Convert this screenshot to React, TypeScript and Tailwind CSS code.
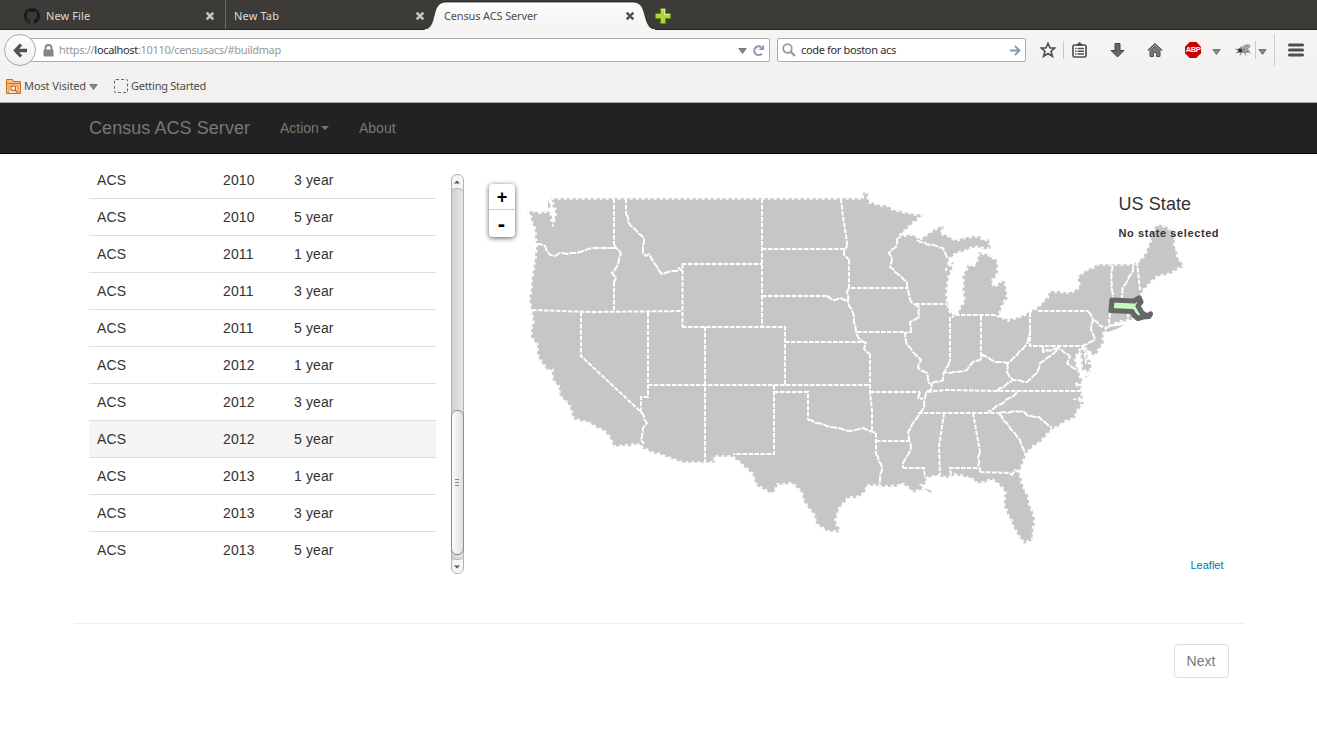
import React from "react";

type Pt = [number, number];

function parse(s: string): Pt[] {
  return s.split(" ").map((p) => p.split(",").map(Number) as Pt);
}

// Breaks a line into short steps with small deterministic offsets, as a shore has.
function rough(s: string, amount: number, close = false): string {
  const pts = parse(s);
  if (close) pts.push(pts[0]);
  let seed = 7;
  const rnd = () => {
    seed = (seed * 16807) % 2147483647;
    return seed / 2147483647 - 0.5;
  };
  const out: string[] = [];
  for (let i = 0; i < pts.length - 1; i++) {
    const [x1, y1] = pts[i];
    const [x2, y2] = pts[i + 1];
    out.push(`${x1},${y1}`);
    const len = Math.hypot(x2 - x1, y2 - y1);
    if (y1 === y2 || len > 60) continue;
    const n = Math.floor(len / 3.5);
    for (let k = 1; k < n; k++) {
      const t = k / n;
      const d = rnd() * amount;
      const x = x1 + (x2 - x1) * t - ((y2 - y1) / len) * d;
      const y = y1 + (y2 - y1) * t + ((x2 - x1) / len) * d;
      out.push(`${x.toFixed(1)},${y.toFixed(1)}`);
    }
  }
  if (!close) out.push(pts[pts.length - 1].join(","));
  return `M${out.join("L")}${close ? "Z" : ""}`;
}

const mainland =
  "528,210 532,219 536,233 537,246 536,258 534,270 532,286 530,298 532,309 534,323 532,331 531.5,336 537,343 539,357 548,370 553,369 554,381 559,386 560,394 570,406 574,419 587,421 602,429 611,438 614,446 641,444 643,448 682,462 714,462 714,456 733,456 753,473 757,485 772,493 777,484 793,483 802,492 804,501 813,512 818,525 828,531 839,532 835,520 838,510 847,498 858,496 864,492 866,485 877,485 897,486 900,483 907,486 913,492 923,489 920,485 926,483 925,479 935,475 948,477 955,474 970,477 978,483 993,479 1000,485 1006,493 1005,507 1010,517 1017,532 1024,543 1032,540 1034,520 1028,498 1021,483 1019,470 1025,453 1043,438 1053,428 1067,420 1075,417 1076,411 1083,403 1074,399 1082,398 1081,392 1081,387 1074,384 1082,383 1079,376 1077,369 1075,362 1075,356 1079,350 1083,347 1081,355 1082,363 1083,370 1089,371 1085,379 1090,370 1091,363 1087,358 1085,348 1089,350 1095,355 1103,343 1103,333 1106,326 1120,321 1133,319 1141,315 1141,293 1150,282 1160,275 1170,273 1178,268 1183,267 1177,258 1174,243 1174,233 1167,228 1158,225 1153,232 1148,248 1147,252 1138,262 1133,265 1097,265 1085,272 1078,278 1080,287 1075,291 1067,293 1050,291 1048,298 1037,309 1020,317 1008,321 997,316 1002,305 1007,298 1005,283 1002,281 994,287 991,282 997,273 997,262 988,255 979,253 978,260 973,267 968,265 963,277 965,300 959,313 953,317 948,310 946,293 948,277 953,263 945,272 948,259 957,252 973,247 990,248 988,240 983,241 980,237 973,237 957,241 940,233 943,226 930,233 920,240 911,235 898,238 902,232 922,215 914,215 904,213 895,211 887,206 880,206 869,203 867,193 864,193 863,199 552,199 556,213 553,226 550,213 530,212";

const rivers = [
  "536,244 545,246 550,255 555,256 560,253 567,254 580,252 592,248 616,248",
  "614,244 616,248 621,254 617,266 612,273 616,278 614,282",
  "626,214 630,225 644,238 643,253 646,256 649,254 657,267 662,274 668,272 677,271 679,268 682,271",
  "641,412 647,423 643,428 641,440 644,444",
  "826,296 832,300 840,298 845,300 848,301",
  "847,242 844,255 849,260",
  "849,288 847,292 848,302 853,313 856,332 860,340 866,343 864,349 870,354",
  "897,238 896,247 889,253 892,258 890,267 907,282 908,290 911,302 919,307 919,317 910,322 911,332 905,333 907,345 916,355 921,360 918,368 927,373 928,382 932,385 931,390 926,392 924,408 917,418 908,432 911,448 903,463 903,468",
  "917,240 920,242 943,248 947,258",
  "949,362 945,372",
  "1030,330 1028,342 1017,355 1008,363 995,362 983,355 980,360 973,362 967,370 950,373 944,372 943,380 932,383",
  "997,391 1012,381",
  "1007,363 1007,372 1013,380 1027,382 1037,373 1040,363 1055,352 1059,348",
  "1043,347 1043,352 1058,348 1070,356 1067,363 1077,370",
  "1017,392 1010,398 988,412",
  "1000,413 1023,411 1028,416 1039,417 1052,428",
  "808,420 827,426 842,429 850,431 863,428 876,433",
  "876,454 882,467 879,485",
  "980,452 978,458 980,472",
  "999,414 1020,440 1025,453",
  "1010,473 1012,475 1015,470 1019,472",
  "1088,311 1093,320 1091,330 1095,340 1083,346",
  "1093,320 1103,327",
  "1112,265 1111,280 1113,298",
  "1133,266 1132,273 1123,287 1122,298",
  "920,392 918,398 923,399",
];

const surveyLines =
  "M614,199V244 M614,282V310 M626,199V214 M682,264H762 M682.5,264V327 M682,327H785V385 M532,310L590,312L682,311 M581,312V356L641,412V397H648V312 M648,385H870 M705,327V462 M762,199V327 M762,249H846 M762,296H826 M841,199L843,217L847,242 M849,260V288H908 M857,332H905 M785,342H864 M870,354V392L872,410V430 M870,392H920 M915,304H947 M950,317V362 M955,315H996 M981,316V359 M1030,313V346H1083 M927,392L945,390L997,391H1082 M918,413H1000 M774,385V454H733 M774,392H808V420 M876,433V454 M876,441H908 M903,468H924L925,478 M944,413L939,447L940,475 M973,413L980,452 M951,475L950,468H978 M980,472L1010,473 M1038,311H1088 M1110,313L1109,323 M1137,262L1140,290 M1128,313V322 M1084,347L1086,363H1090";

function UsMap() {
  const coast = rough(mainland, 1.8, true);
  return (
    <svg className="block h-[400px] w-[750px]" viewBox="479 174 750 400" fill="none">
      <path d={coast} fill="#c6c6c6" stroke="#c6c6c6" strokeWidth="1.6" strokeLinejoin="round" />
      <path d="M1105,331L1109,327L1124,325L1119,328L1108,332ZM924,488L932,491L930,493ZM918,215L922,214L921,216ZM548,200L551,206L548,209Z" fill="#c6c6c6" />
      <path d={coast} stroke="#fff" strokeWidth="1.6" strokeDasharray="3 3" strokeLinejoin="round" />
      <g stroke="#fff" strokeWidth="2" strokeDasharray="4.6 1.4">
        <path d={surveyLines} />
        {rivers.map((r) => (
          <path key={r} d={rough(r, 1.6)} strokeDasharray="7 1" strokeLinejoin="round" />
        ))}
      </g>
      <path
        d="M1112,300L1134,301L1139,298L1141,302L1138,306L1142,313L1147,316L1150.500,314L1149,316.500L1143,317L1138,318.500L1134,315L1132,311.500L1111,310.500Z"
        fill="#c3fac3"
        stroke="#666"
        strokeWidth="5.2"
        strokeLinejoin="round"
      />
    </svg>
  );
}

function Caret({ className = "" }: { className?: string }) {
  return (
    <svg className={`h-[6px] w-[9px] shrink-0 ${className}`} viewBox="0 0 9 6">
      <path d="M.8.5H8.200L4.500 5.500Z" fill="#878787" stroke="#666" strokeWidth=".8" />
    </svg>
  );
}

function Close({ dark = false }: { dark?: boolean }) {
  return (
    <svg className="h-[10px] w-[10px]" viewBox="0 0 9 9">
      <path d="M1.500 1.500L7.500 7.500M7.500 1.500L1.500 7.500" stroke={dark ? "#555" : "#c9c7c0"} strokeWidth="2.300" />
    </svg>
  );
}

function TabStrip() {
  return (
    <div className="relative flex h-[30px] border-b border-[#24231f] bg-[#3c3b37] text-[11px] text-[#dfdbd2]">
      <div className="flex w-[225px] items-center pt-[3px] pl-[24px]">
        <svg className="h-4 w-4" viewBox="0 0 16 16" fill="#1b1b1b">
          <path d="M8 0C3.580 0 0 3.580 0 8c0 3.540 2.290 6.530 5.470 7.590.4.070.55-.17.55-.38 0-.19-.01-.82-.01-1.490-2.010.37-2.530-.49-2.690-.94-.09-.23-.48-.94-.82-1.130-.28-.15-.68-.52-.01-.53.63-.01 1.080.58 1.230.82.72 1.210 1.870.87 2.330.66.070-.52.28-.87.51-1.070-1.780-.2-3.640-.89-3.640-3.950 0-.87.31-1.590.82-2.150-.08-.2-.36-1.020.080-2.120 0 0 .67-.21 2.200.82.640-.18 1.320-.27 2-.27s1.360.09 2 .27c1.530-1.040 2.200-.82 2.200-.82.44 1.100.16 1.920.080 2.120.51.56.82 1.270.82 2.150 0 3.070-1.870 3.750-3.650 3.950.29.25.54.73.54 1.480 0 1.070-.01 1.930-.01 2.200 0 .21.15.46.55.38A8.010 8.010 0 0 0 16 8c0-4.420-3.580-8-8-8" />
        </svg>
        <span className="ml-[6px] w-[159px] tracking-[0.1px]">New File</span>
        <Close />
      </div>
      <div className="flex w-[208px] items-center border-l border-[#6d6b65] pt-[3px] pl-[8px]">
        <span className="w-[181px] tracking-[0.15px]">New Tab</span>
        <Close />
      </div>
      <svg className="absolute top-0 left-[420px] h-[30px] w-[240px]" viewBox="0 0 240 30">
        <defs>
          <linearGradient id="tab" x1="0" y1="0" x2="0" y2="1">
            <stop offset="0" stopColor="#fcfcfc" />
            <stop offset="1" stopColor="#f5f4f3" />
          </linearGradient>
        </defs>
        <path d="M2 30C19 30 9 2 26 2H213C230 2 220 30 238 30Z" fill="url(#tab)" stroke="#24231f" strokeWidth=".8" />
        <path d="M5 30H235" stroke="#f6f5f4" strokeWidth="2" />
      </svg>
      <div className="relative flex w-[220px] items-center pt-[3px] pl-[11px] text-[#4c4c4c]">
        <span className="w-[181px] tracking-[-0.15px]">Census ACS Server</span>
        <Close dark />
      </div>
      <svg className="mt-[8px] ml-[2px] h-4 w-4" viewBox="0 0 16 16">
        <path d="M5.500.5H10.500V5.500H15.500V10.500H10.500V15.500H5.500V10.500H.5V5.500H5.500Z" fill="#b5d334" stroke="#5f8a1d" />
        <path d="M6.500 1.500H9.500V6.500H14.500" fill="none" stroke="#e0ef9c" />
      </svg>
    </div>
  );
}

function ToolIcons() {
  return (
    <div className="flex h-full flex-1 items-center">
      <svg className="ml-[14px] h-4 w-4" viewBox="0 0 16 16">
        <path d="M8 1.500L10 6H14.700L11 9.200L12.400 14.300L8 11.500L3.600 14.300L5 9.200L1.300 6H6Z" fill="#fff" stroke="#505050" strokeWidth="1.700" />
      </svg>
      <div className="ml-[7px] h-[18px] w-px bg-[#c3c9cf]" />
      <svg className="ml-[8px] h-4 w-[15px]" viewBox="0 0 15 16">
        <rect x="1" y="3" width="13" height="12" rx="1.500" fill="#fff" stroke="#505050" strokeWidth="1.700" />
        <path d="M4 3.500L7.500.5L11 3.500Z" fill="#505050" stroke="#505050" />
        <path d="M3 6.500H4.500M3 9.200H4.500M3 12H4.500M5.500 6.500H12M5.500 9.200H12M5.500 12H12" stroke="#505050" strokeWidth="1.500" />
      </svg>
      <svg className="ml-[23px] h-[15px] w-[15px]" viewBox="0 0 15 15">
        <path d="M5 .5H10V7.500H14L7.500 14L1 7.500H5Z" fill="#666" stroke="#484848" />
      </svg>
      <svg className="ml-[22px] h-4 w-4" viewBox="0 0 16 16">
        <path d="M1 8.500L8 2L15 8.500" fill="none" stroke="#505050" strokeWidth="1.500" />
        <path d="M3 8.500L8 4.200L13 8.500V14.500H9.500V10.500H6.500V14.500H3Z" fill="#777" stroke="#505050" />
      </svg>
      <div className="relative ml-[22px] h-4 w-4">
        <svg className="h-4 w-4" viewBox="0 0 16 16">
          <path d="M4.700 0H11.300L16 4.700V11.300L11.300 16H4.700L0 11.300V4.700Z" fill="#c70000" />
        </svg>
        <span className="absolute inset-0 text-center font-['Liberation_Sans',sans-serif] text-[7.500px] leading-[16px] font-bold tracking-[-0.5px] text-white">ABP</span>
      </div>
      <Caret className="mt-[3px] ml-[11px]" />
      <svg className="ml-[14px] h-3 w-4" viewBox="0 0 16 12">
        <ellipse cx="10.500" cy="3.500" rx="4.500" ry="2" transform="rotate(-20 10 3)" fill="#bbb" stroke="#777" strokeWidth=".7" />
        <ellipse cx="10" cy="7" rx="4.500" ry="2" fill="#999" />
        <circle cx="5" cy="6.500" r="2.300" fill="#333" />
        <path d="M.5 5L4 6M1 9L5 7.500M5 11.500L7 8M9 8L11 11.500M12 7L15.500 9M6 4L5 2.500M8 5.500L13 1.500" stroke="#666" strokeWidth=".8" />
      </svg>
      <div className="ml-[4px] h-[18px] w-px bg-[#c3c9cf]" />
      <Caret className="mt-[3px] ml-[2px]" />
      <div className="ml-[7px] h-8 w-px bg-[#c4cdd6]" />
      <svg className="ml-[13px] h-[14px] w-4" viewBox="0 0 16 14">
        <path d="M1.500 2H14.500M1.500 7H14.500M1.500 12H14.500" stroke="#4c4f4e" strokeWidth="3" strokeLinecap="round" />
      </svg>
    </div>
  );
}

function Toolbar() {
  return (
    <div className="h-[73px] border-b border-[#a9a5a0] bg-linear-to-b from-[#f6f5f4] to-[#f1f0ee] text-[11px]">
      <div className="flex h-[40px] items-center">
        <div className="relative z-10 ml-[4px] flex h-8 w-8 items-center justify-center rounded-full border border-[#9fa8b3] bg-linear-to-b from-white to-[#f0f0f0]">
          <svg className="h-[15px] w-[15px]" viewBox="0 0 15 15">
            <path d="M8 1.500L2.500 7.500L8 13.500M3 7.500H14" fill="none" stroke="#505050" strokeWidth="3.300" />
          </svg>
        </div>
        <div className="ml-[-7px] flex h-[24px] w-[741px] items-center rounded-r-[2px] border border-[#aeaaa5] bg-white pl-[13px] text-[#979797]">
          <svg className="h-[13px] w-[11px]" viewBox="0 0 11 13">
            <path d="M2.500 6V4A3 3 0 0 1 8.500 4V6" fill="none" stroke="#858585" strokeWidth="1.800" />
            <rect x=".5" y="5.500" width="10" height="7" rx="1" fill="#858585" />
          </svg>
          <span className="ml-[5px] flex-1 tracking-[-0.32px] whitespace-nowrap">
            https://<span className="text-[#2e2e2e]">localhost</span>:10110/censusacs/#buildmap
          </span>
          <Caret className="mt-[2px] mr-[-1px]" />
          <svg className="mr-[4px] ml-[6px] h-[13px] w-[13px]" viewBox="0 0 13 13">
            <path d="M9.800 9.800A4.400 4.400 0 1 1 9.300 3.200" fill="none" stroke="#8d9aab" strokeWidth="2" />
            <path d="M12 .8V6H6.700Z" fill="#8d9aab" />
          </svg>
        </div>
        <div className="ml-[7px] flex h-[24px] w-[249px] items-center rounded-[2px] border border-[#aeaaa5] bg-white text-[#2e2e2e]">
          <svg className="ml-[4px] h-[14px] w-[14px]" viewBox="0 0 14 14">
            <circle cx="5.500" cy="5.500" r="4.300" fill="none" stroke="#999" strokeWidth="1.700" />
            <path d="M8.600 8.600L13 13" stroke="#999" strokeWidth="2.200" />
          </svg>
          <span className="ml-[5px] flex-1 tracking-[-0.34px] whitespace-nowrap">code for boston acs</span>
          <svg className="mr-[4px] h-[11px] w-[11px]" viewBox="0 0 11 11">
            <path d="M0 5.500H9M5 1L9.500 5.500L5 10" fill="none" stroke="#8499ad" strokeWidth="1.800" />
          </svg>
        </div>
        <ToolIcons />
      </div>
      <div className="flex h-[32px] items-center text-[#4c4c4c]">
        <svg className="ml-[6px] h-[15px] w-[15px]" viewBox="0 0 15 15">
          <path d="M.5 14.500V.5H6.500L7.500 2.500H14.500V14.500Z" fill="#f6bf86" stroke="#d2691a" />
          <path d="M1 4.500H14" stroke="#d2691a" />
          <path d="M3 14V7H12V14" fill="#fbe3c8" stroke="#d98033" strokeWidth=".8" />
          <circle cx="7.300" cy="9.300" r="2.300" fill="#fff" stroke="#d2691a" strokeWidth="1.200" />
          <path d="M9 11L11.500 13.500" stroke="#d2691a" strokeWidth="1.500" />
        </svg>
        <span className="ml-[3px] w-[65px] tracking-[-0.1px] whitespace-nowrap">Most Visited</span>
        <Caret className="mt-[2px]" />
        <div className="ml-[16px] h-[14px] w-[14px] rounded-[2px] border border-dashed border-[#666]" />
        <span className="ml-[3px] tracking-[-0.27px] whitespace-nowrap">Getting Started</span>
      </div>
    </div>
  );
}

const rows = [
  ["2010", "3 year"],
  ["2010", "5 year"],
  ["2011", "1 year"],
  ["2011", "3 year"],
  ["2011", "5 year"],
  ["2012", "1 year"],
  ["2012", "3 year"],
  ["2012", "5 year"],
  ["2013", "1 year"],
  ["2013", "3 year"],
  ["2013", "5 year"],
];

function SurveyList() {
  return (
    <div className="mt-[7px] w-[347px] text-[14px] leading-5 tracking-[0.12px]">
      {rows.map(([year, span], i) => (
        <div
          key={i}
          className={`flex h-[37px] border-[#ddd] pr-2 pl-[8.500px] ${i === 0 ? "pt-[9px]" : "border-t pt-2"} ${i === 7 ? "bg-[#f5f5f5]" : ""}`}
        >
          <span className="w-[126px]">ACS</span>
          <span className="w-[71px]">{year}</span>
          <span>{span}</span>
        </div>
      ))}
    </div>
  );
}

function Scrollbar() {
  return (
    <div className="mt-[20px] ml-[15px] flex h-[400px] w-[13px] flex-col rounded-[6px] border border-[#b5b2ad] bg-linear-to-r from-[#d4d2cf] to-[#e6e5e3]">
      <div className="flex h-[13px] items-center justify-center rounded-t-[6px] bg-[#f6f5f4]">
        <svg className="h-[4px] w-[6px]" viewBox="0 0 6 4"><path d="M0 3.500L3 .5L6 3.500Z" fill="#555" /></svg>
      </div>
      <div className="h-[222px] rounded-t-[6px] border-t border-[#b5b2ad]" />
      <div className="-mx-px flex h-[145px] flex-col items-center justify-center gap-[2px] rounded-[6px] border border-[#8f8c87] bg-linear-to-r from-[#fbfbfa] to-[#e3e1de]">
        <div className="h-px w-[4px] bg-[#888]" />
        <div className="h-px w-[4px] bg-[#888]" />
        <div className="h-px w-[4px] bg-[#888]" />
      </div>
      <div className="h-[5px] rounded-b-[6px] border-b border-[#b5b2ad]" />
      <div className="flex flex-1 items-center justify-center rounded-b-[6px] bg-[#f6f5f4]">
        <svg className="h-[4px] w-[6px]" viewBox="0 0 6 4"><path d="M0 .5H6L3 3.500Z" fill="#555" /></svg>
      </div>
    </div>
  );
}

function MapPanel() {
  return (
    <div className="relative mt-[20px] ml-[15px] h-[400px] w-[750px]">
      <UsMap />
      <div className="absolute top-[10px] left-[10px] w-[26px] overflow-hidden rounded-[4px] bg-white text-center text-[18px] font-bold text-black shadow-[0_1px_5px_rgba(0,0,0,0.65)]">
        <div className="h-[26px] border-b border-[#ccc] pl-px leading-[26px]">+</div>
        <div className="h-[27px] text-[22px] leading-[27px]">-</div>
      </div>
      <div className="absolute top-[20px] left-[640px] whitespace-nowrap">
        <h4 className="text-[18px] leading-[20px] tracking-[0.08px]">US State</h4>
        <p className="mt-[11px] text-[11px] leading-[16px] font-bold tracking-[0.6px]">No state selected</p>
      </div>
      <a className="absolute right-[5px] bottom-0 text-[11px] leading-[17px] text-[#0078a8]">Leaflet</a>
    </div>
  );
}

export default function App() {
  return (
    <div className="h-[750px] w-[1317px] overflow-hidden bg-white font-['Liberation_Sans',Arial,sans-serif] text-[#333]">
      <div className="font-['Noto_Sans','Open_Sans',sans-serif]">
        <TabStrip />
        <Toolbar />
      </div>
      <nav className="flex h-[51px] items-center border-b border-[#080808] bg-[#222] pl-[89px] text-[14px] text-[#777]">
        <span className="w-[191px] text-[18px] tracking-[0.06px]">Census ACS Server</span>
        <span className="flex w-[79px] items-center">
          Action
          <span className="ml-[2px] border-x-4 border-t-4 border-x-transparent border-t-[#777]" />
        </span>
        <span>About</span>
      </nav>
      <main className="mx-auto w-[1170px]">
        <div className="flex h-[469px] pl-[15px]">
          <SurveyList />
          <Scrollbar />
          <MapPanel />
        </div>
        <hr className="border-[#eee]" />
        <div className="flex justify-end pt-[20px] pr-[15px]">
          <button className="h-[34px] w-[55px] rounded-[4px] border border-[#ddd] bg-white text-[14px] text-[#777]">Next</button>
        </div>
      </main>
    </div>
  );
}
